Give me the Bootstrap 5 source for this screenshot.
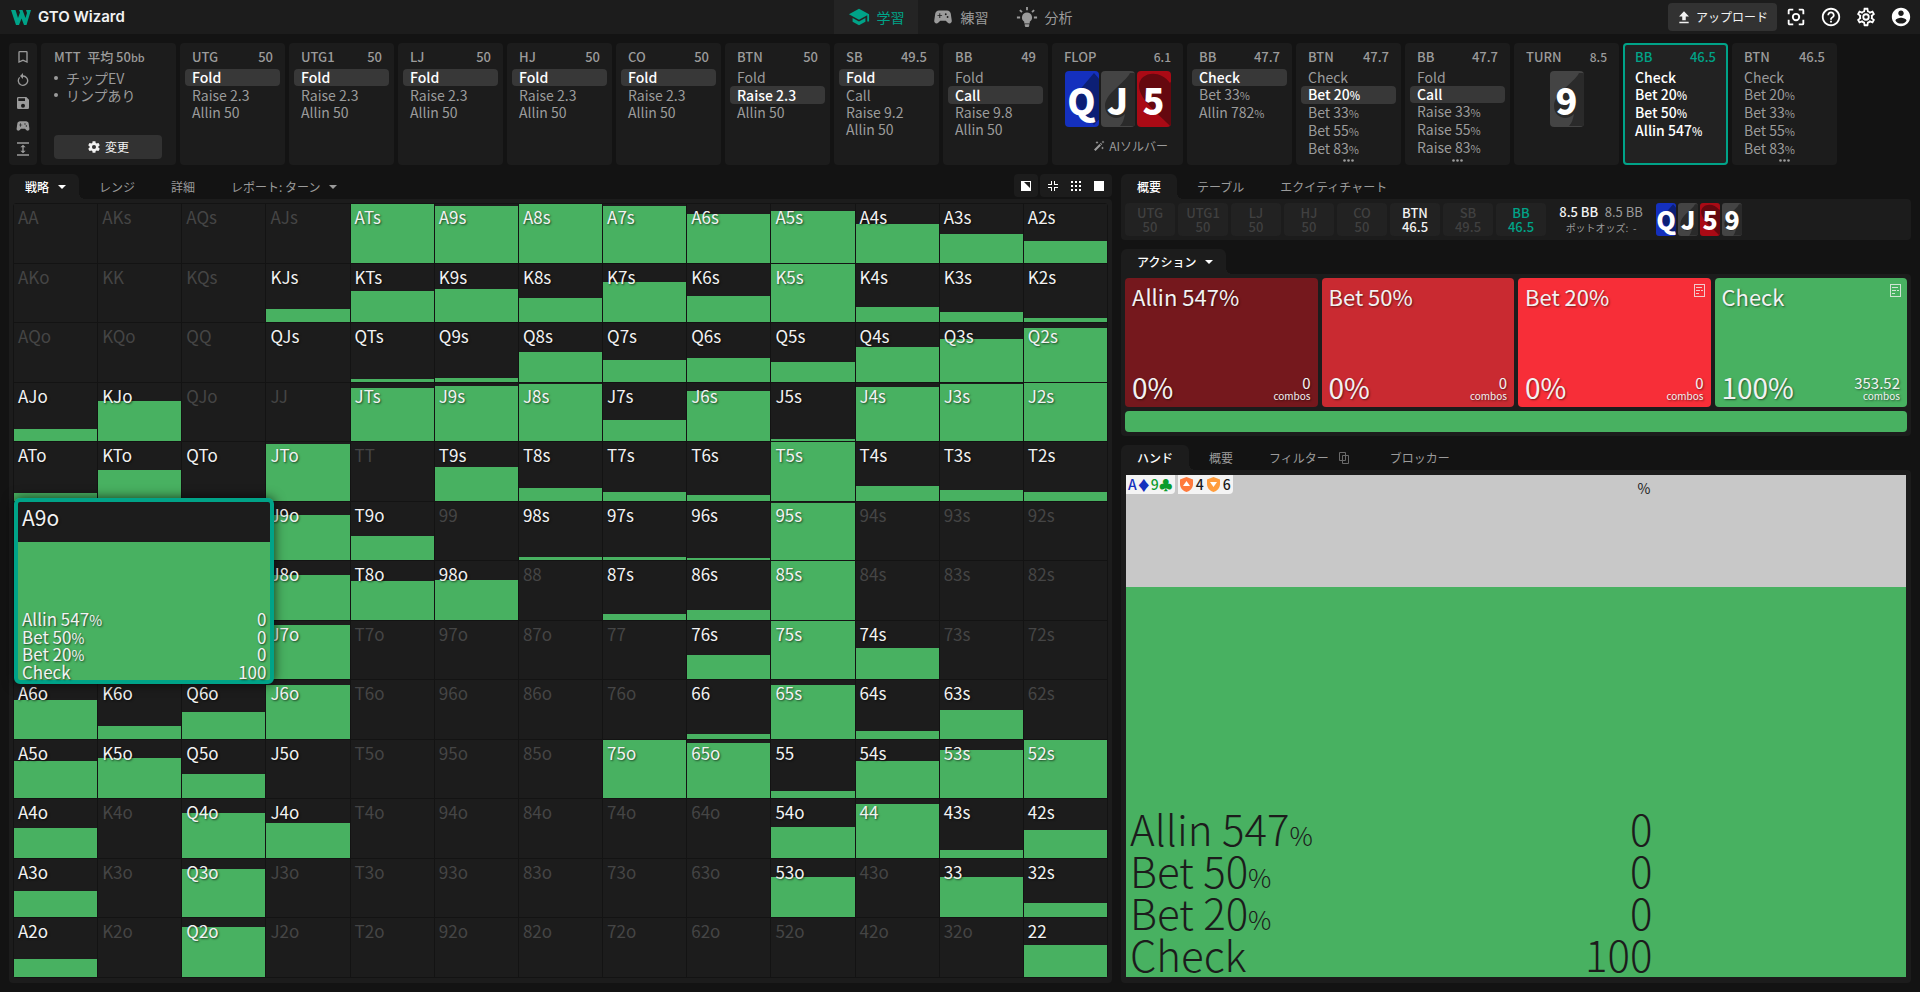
<!DOCTYPE html>
<html lang="ja" data-bs-theme="dark">
<head>
<meta charset="utf-8">
<meta name="viewport" content="width=device-width, initial-scale=1">
<title>GTO Wizard</title>
<link rel="stylesheet" href="https://cdn.jsdelivr.net/npm/bootstrap@5.3.0/dist/css/bootstrap.min.css">
<style>
:root{--panel:#1c1c1c;--page:#131313;--green:#48b161;--teal:#00a388;--dim:#9b9b9b}
body{background:var(--page);color:#f2f2f2;font-family:"Noto Sans CJK JP","Noto Sans",sans-serif;font-size:12px;line-height:18px;min-height:100vh}
button{font:inherit;color:inherit;border:0;background:none;padding:0}
a{color:inherit;text-decoration:none}
svg{display:block;fill:currentColor;flex:none}
.i12{width:12px;height:12px}.i14{width:14px;height:14px}.i16{width:16px;height:16px}.i22{width:22px;height:22px}
.top-bar{background:var(--panel);height:34px;display:grid;grid-template-columns:1fr auto 1fr;color:var(--dim)}
.brand{padding-left:11px;gap:7px}
.brand-name{font:600 15px/20px Inter,sans-serif;color:#f2f2f2}
.main-tab{width:84px;font-size:14px;gap:7px}
.main-tab.on{background:#242424;color:var(--teal)}
.top-icons{gap:13px}
.upload-btn{background:#323232;height:28px;border-radius:4px;padding:0 9px;gap:5px;color:#f2f2f2}
.panel{background:var(--panel);border-radius:4px}
.strip{padding:0 9px;margin-top:9px;gap:4px;height:122px;color:var(--dim)}
.tools{width:28px;padding:6px 0 8px}
.setup{width:135px;padding:5px 14px 6px 13px;font-size:14px}
.setup ul{padding:0;list-style:none;margin:4px 0 0;line-height:17px}
.setup li::before{content:"";display:inline-block;width:4px;height:4px;border-radius:50%;background:currentColor;margin-right:8px;vertical-align:4px}
.setup .fs{font-size:13px;font-weight:500}
.edit-btn{background:#323232;height:24px;border-radius:4px;color:#f2f2f2;font-size:12px;gap:4px}
.node{width:105px;padding:5px 5px 0}
.node-head{font-size:13px;font-weight:500;padding:0 7px;height:18px;margin-bottom:3px}
.node-head .pot-size{font-size:12px}
.node-rows{display:grid;grid-template-rows:repeat(5,1fr);height:87px;font-size:14px}
.node-rows button{text-align:left;padding:0 7px;line-height:17px;border-radius:4px;white-space:nowrap}
.node-rows .sel{background:#383838;color:#fff;font-weight:500}
.node small,.pct{font-size:11px}
.node.act{box-shadow:inset 0 0 0 2px var(--teal);background:#222}
.node.act .node-rows{color:#fff;font-weight:500}.node.act .node-head{color:var(--teal)}
.more{width:11px;height:3px;margin:3px auto 0}
.flop{width:131px}
.flop .solver{gap:4px;margin:10px 10px 0 auto}
.cards{gap:2px}
.node .cards{padding-top:2px}
.pcard{position:relative;border-radius:4px;width:34px;height:56px;font-size:36px;font-weight:700;color:#fff;display:flex;align-items:center;justify-content:center;line-height:56px}
.pcard svg{position:absolute;inset:0;width:100%;height:100%;overflow:hidden;border-radius:inherit}
.pcard b{position:relative}
.pcard.mini{width:20px;height:33px;font-size:25px;line-height:33px;border-radius:3px}
.c-d{background:#1430be}.c-d svg{color:#0c1f75}
.c-s{background:#444}.c-s svg{color:#2a2a2a}
.c-h{background:#aa0a15}.c-h svg{color:#65080f}
.work{padding:9px;gap:9px}
.left-col{flex:1103 1 0;min-width:0}.right-col{flex:790 1 0;min-width:0}
.tab-row{height:25px;gap:4px;color:var(--dim)}
.tab-row.next{margin-top:9px}
.tab-btn{height:25px;padding:0 16px;display:flex;align-items:center;gap:9px}
.tab-btn.on{background:var(--panel);color:#fff;font-weight:500;border-radius:6px 6px 0 0;position:relative}
.tab-btn.on.drop{padding-right:13px}
.tab-btn.on::after{content:"";position:absolute;left:100%;bottom:0;width:6px;height:6px;background:radial-gradient(circle at 100% 0,transparent 6px,var(--panel) 6px)}
.body-panel{background:var(--panel);border-radius:0 4px 4px 4px;padding:4px}
.caret{width:8px;height:4px}
.views{gap:2px}
.view-box{background:var(--panel);border-radius:4px;height:23px;padding:0 7px;gap:11px}
button.view-box{padding:0 6px}
.matrix{flex:1;display:grid;grid-template:repeat(13,1fr)/repeat(13,1fr);gap:1px;padding:1px;background:#131313;border-radius:4px;position:relative;margin-bottom:1px}
.hand{background:var(--panel);display:flex;align-items:flex-end;position:relative;min-width:0;min-height:0}
.hand i{flex:1;background:var(--green)}
.hand span{position:absolute;left:4px;top:3px;font-size:17px;line-height:20px;color:#454545}
.hand.in span,.pop{color:#f2f2f2;text-shadow:1px 1px 2px rgba(0,0,0,.6)}
.pop{position:absolute;grid-area:6/1/9/4;inset:-4px -9px -5px 0;z-index:2;border:4px solid var(--teal);border-radius:6px;background:linear-gradient(#1c1c1c 40px,var(--green) 40px);box-shadow:0 0 12px rgba(0,0,0,.7);padding:0 4px;display:flex;flex-direction:column;justify-content:space-between;font-size:17px}
.pop strong{font-size:21px;font-weight:400;line-height:31px}
.pop dl{display:grid;grid-template:repeat(4,1fr)/1fr auto;height:70px;line-height:17px;margin:0}
.pop dt{font-weight:400}.pop dd{margin:0;text-align:right}.pop small{font-size:14px;line-height:12px}
.seats{gap:3px}
.seat{background:#222;border-radius:4px;flex:0 0 50px;height:33px;color:#404040;font-size:13px;font-weight:500;line-height:14px;text-align:center;padding-top:3px}
.seat.w{color:#f2f2f2}.seat.t{color:var(--teal)}
.pot{width:88px;font-size:13px;line-height:16px;text-align:center;white-space:nowrap;padding-top:1px}
.pot b{font-weight:500}.pot span,.pot div{color:var(--dim)}
.pot div{font-size:10px}
.act-grid{display:grid;grid-template-columns:repeat(4,1fr);gap:4px}
.act-box{height:129px;border-radius:4px;padding:5px 5px 5px 7px;display:flex;flex-direction:column;justify-content:space-between;text-align:left;font-size:22px;line-height:26px;text-shadow:1px 1px 2px rgba(0,0,0,.5)}
.act-box svg{width:13px;height:13px;margin-top:1px;opacity:.8}
.act-box .big{font-size:28px;line-height:30px}
.act-box .cnt{font-size:15px;line-height:14px;text-align:right;padding-right:2px}
.act-box .cnt small{display:block;font-size:10px;line-height:12px}
.mix{height:21px;border-radius:4px;background:var(--green);margin-top:4px}
.combo{flex:1;background:linear-gradient(#c8c8c8 112px,var(--green) 112px);margin:1px 1px 2px;color:#1c1c1c;display:flex;flex-direction:column;justify-content:space-between}
.combo-top{width:68%;padding-right:6px;gap:3px;font-size:14px}
.chip{background:#f4f4f4;height:19px;border-radius:0 0 4px 0;padding:0 2px;gap:3px;font-weight:500;line-height:19px;display:flex;align-items:center}
.chip .d{color:#1430be}.chip .c{color:#0a9c2c}
.big-list{font-size:42px;font-weight:300;line-height:42px;margin:0 0 2px;width:68%;padding:0 4px}
.big-list div{display:flex;justify-content:space-between;height:42px}
.big-list dt{font-weight:300}.big-list dd{margin:0}
.big-list small{font-size:26px;line-height:26px}
</style>
</head>
<body class="d-flex flex-column">
<svg width="0" height="0" class="position-absolute" aria-hidden="true"><defs>
<symbol id="school" viewBox="0 0 24 24"><path d="M5 13.2v4L12 21l7-3.8v-4L12 17zM12 3 1 9l11 6 9-4.9V17h2V9z"/></symbol>
<symbol id="pad" viewBox="0 0 24 24"><path fill-rule="evenodd" d="M21.58 16.09l-1.09-7.66C20.21 6.46 18.52 5 16.53 5H7.47C5.48 5 3.79 6.46 3.51 8.43l-1.09 7.66C2.2 17.63 3.39 19 4.94 19c.68 0 1.32-.27 1.8-.75L9 16h6l2.25 2.25c.48.48 1.13.75 1.8.75 1.56 0 2.75-1.37 2.53-2.91zM11 11H9v2H8v-2H6v-1h2V8h1v2h2zm4-1a1 1 0 1 1 0-2 1 1 0 0 1 0 2zm2 3a1 1 0 1 1 0-2 1 1 0 0 1 0 2z"/></symbol>
<symbol id="bulb" viewBox="0 0 24 24"><path d="M12 7a5.5 5.5 0 0 0-3 10.100V19h6v-1.900A5.500 5.500 0 0 0 12 7zM9.500 20h5v1.500H14V23h-4v-1.500h-.5zM11 1h2v3.500h-2zM1 11.500h3.500v2H1zM19.500 11.500H23v2h-3.500zM3.500 5.200 5 3.800l2.200 2.200-1.400 1.400zM16.800 6 19 3.800l1.500 1.400-2.300 2.200z"/></symbol>
<symbol id="upload" viewBox="0 0 24 24"><path d="M4 20h16v2.500H4zM3.500 11H9v6.500h6V11h5.500L12 2z"/></symbol>
<symbol id="focus" viewBox="0 0 24 24"><path fill-rule="evenodd" d="M5 15H3v4c0 1.100.9 2 2 2h4v-2H5zM5 5h4V3H5a2 2 0 0 0-2 2v4h2zm14-2h-4v2h4v4h2V5a2 2 0 0 0-2-2zm0 16h-4v2h4a2 2 0 0 0 2-2v-4h-2zM12 7.500a4.500 4.500 0 1 0 0 9 4.500 4.500 0 0 0 0-9zm0 7a2.500 2.500 0 1 1 0-5 2.500 2.500 0 0 1 0 5z"/></symbol>
<symbol id="help" viewBox="0 0 24 24"><path d="M11 18h2v-2h-2v2zm1-16C6.480 2 2 6.480 2 12s4.480 10 10 10 10-4.480 10-10S17.520 2 12 2zm0 18c-4.410 0-8-3.590-8-8s3.590-8 8-8 8 3.590 8 8-3.590 8-8 8zm0-14c-2.210 0-4 1.790-4 4h2c0-1.100.9-2 2-2s2 .9 2 2c0 2-3 1.750-3 5h2c0-2.250 3-2.500 3-5 0-2.210-1.790-4-4-4z"/></symbol>
<symbol id="cogo" viewBox="0 0 24 24"><path fill-rule="evenodd" d="M12,8A4,4 0 0,1 16,12A4,4 0 0,1 12,16A4,4 0 0,1 8,12A4,4 0 0,1 12,8M12,10A2,2 0 0,0 10,12A2,2 0 0,0 12,14A2,2 0 0,0 14,12A2,2 0 0,0 12,10M10,22C9.75,22 9.54,21.82 9.5,21.58L9.13,18.93C8.5,18.68 7.96,18.34 7.44,17.94L4.95,18.95C4.73,19.03 4.46,18.95 4.34,18.73L2.34,15.27C2.21,15.05 2.27,14.78 2.46,14.63L4.57,12.97L4.5,12L4.57,11L2.46,9.37C2.27,9.22 2.21,8.95 2.34,8.73L4.34,5.27C4.46,5.05 4.73,4.96 4.95,5.05L7.44,6.05C7.96,5.66 8.5,5.32 9.13,5.07L9.5,2.42C9.54,2.18 9.75,2 10,2H14C14.25,2 14.46,2.18 14.5,2.42L14.87,5.07C15.5,5.32 16.04,5.66 16.56,6.05L19.05,5.05C19.27,4.96 19.54,5.05 19.66,5.27L21.66,8.73C21.79,8.95 21.73,9.22 21.54,9.37L19.43,11L19.5,12L19.43,13L21.54,14.63C21.73,14.78 21.79,15.05 21.66,15.27L19.66,18.73C19.54,18.95 19.27,19.04 19.05,18.95L16.56,17.95C16.04,18.34 15.5,18.68 14.87,18.93L14.5,21.58C14.46,21.82 14.25,22 14,22H10M11.25,4L10.88,6.61C9.68,6.86 8.62,7.5 7.85,8.39L5.44,7.35L4.69,8.65L6.8,10.2C6.4,11.37 6.4,12.64 6.8,13.8L4.68,15.36L5.43,16.66L7.86,15.62C8.63,16.5 9.68,17.14 10.87,17.38L11.24,20H12.76L13.13,17.39C14.32,17.14 15.37,16.5 16.14,15.62L18.57,16.66L19.32,15.36L17.2,13.81C17.6,12.64 17.6,11.37 17.2,10.2L19.31,8.65L18.56,7.35L16.15,8.39C15.38,7.5 14.32,6.86 13.12,6.62L12.75,4H11.25Z"/></symbol>
<symbol id="cog" viewBox="0 0 24 24"><path fill-rule="evenodd" d="M12,15.5A3.5,3.5 0 0,1 8.5,12A3.5,3.5 0 0,1 12,8.5A3.5,3.5 0 0,1 15.5,12A3.5,3.5 0 0,1 12,15.5M19.43,12.97L19.5,12L19.43,11L21.54,9.37C21.73,9.22 21.79,8.95 21.66,8.73L19.66,5.27C19.54,5.05 19.27,4.96 19.05,5.05L16.56,6.05C16.04,5.66 15.5,5.32 14.87,5.07L14.5,2.42C14.46,2.18 14.25,2 14,2H10C9.75,2 9.54,2.18 9.5,2.42L9.13,5.07C8.5,5.32 7.96,5.66 7.44,6.05L4.95,5.05C4.73,4.96 4.46,5.05 4.34,5.27L2.34,8.73C2.21,8.95 2.27,9.22 2.46,9.37L4.57,11L4.5,12L4.57,12.97L2.46,14.63C2.27,14.78 2.21,15.05 2.34,15.27L4.34,18.73C4.46,18.95 4.73,19.03 4.95,18.95L7.44,17.94C7.96,18.34 8.5,18.68 9.13,18.93L9.5,21.58C9.54,21.82 9.75,22 10,22H14C14.25,22 14.46,21.82 14.5,21.58L14.87,18.93C15.5,18.67 16.04,18.34 16.56,17.94L19.05,18.95C19.27,19.03 19.54,18.95 19.66,18.73L21.66,15.27C21.79,15.05 21.73,14.78 21.54,14.63Z"/></symbol>
<symbol id="user" viewBox="0 0 24 24"><path d="M12 2C6.480 2 2 6.480 2 12s4.480 10 10 10 10-4.480 10-10S17.520 2 12 2zm0 3c1.660 0 3 1.340 3 3s-1.340 3-3 3-3-1.340-3-3 1.340-3 3-3zm0 14.200c-2.500 0-4.710-1.280-6-3.220.03-1.990 4-3.080 6-3.080 1.990 0 5.970 1.090 6 3.080-1.290 1.940-3.500 3.220-6 3.220z"/></symbol>
<symbol id="mark-i" viewBox="0 0 24 24"><path fill-rule="evenodd" d="M17 3H7a2 2 0 0 0-2 2v16l7-3 7 3V5a2 2 0 0 0-2-2zm0 15-5-2.200L7 18V5h10z"/></symbol>
<symbol id="redo" viewBox="0 0 24 24"><path d="M12 5V1.500L7.500 6l4.500 4.500V7a6 6 0 1 1-4.300 1.800L6.300 7.400A8 8 0 1 0 12 5z"/></symbol>
<symbol id="save" viewBox="0 0 24 24"><path fill-rule="evenodd" d="M17 3H5a2 2 0 0 0-2 2v14a2 2 0 0 0 2 2h14a2 2 0 0 0 2-2V7zm-5 16a3 3 0 1 1 0-6 3 3 0 0 1 0 6zm3-10H5V5h10z"/></symbol>
<symbol id="expand" viewBox="0 0 24 24"><path d="M3 20h18v2H3zM3 2h18v2H3zM13 9.500h3l-4-4-4 4h3v5H8l4 4 4-4h-3z"/></symbol>
<symbol id="wand" viewBox="0 0 24 24"><path d="m2 19 11-11 3 3L5 22zM14 7l1.500-1.500 3 3L17 10zM8 2l1 2 2 1-2 1-1 2-1-2-2-1 2-1zM20 1l.8 2.200L23 4l-2.200.8L20 7l-.8-2.200L17 4l2.200-.8zM19 13l.9 2.100L22 16l-2.100.9L19 19l-.9-2.100L16 16l2.100-.9z"/></symbol>
<symbol id="note" viewBox="0 0 13 13"><path fill-rule="evenodd" d="M1 0h11v13H1zM2 1v11h9V1zM3 3h6v1H3zM3 6h4v1H3zM8 6h2v1H8zM3 9h3v1H3z"/></symbol>
<symbol id="dots" viewBox="0 0 11 3"><circle cx="1.500" cy="1.500" r="1.300"/><circle cx="5.500" cy="1.500" r="1.300"/><circle cx="9.500" cy="1.500" r="1.300"/></symbol>
<symbol id="dia" viewBox="0 0 34 56"><path d="M29 2 52 28 29 54 7 28z"/></symbol>
<symbol id="spa" viewBox="0 0 34 56"><path d="M29 2C24 12 4 22 4 35c0 11 12 16 20 8-1 5-2 9-5 12h20V2z"/></symbol>
<symbol id="hea" viewBox="0 0 34 56"><path d="M33 55C24 45 2 29 2 15 2 2 22-3 33 12c3-4 8-8 12-8v40z"/></symbol>
<symbol id="car" viewBox="0 0 8 4"><path d="M0 0h8L4 4z"/></symbol>
</defs></svg>

<header class="top-bar">
  <a href="#" class="brand d-flex align-items-center"><svg width="20" height="15" viewBox="0 0 20 15" style="color:var(--teal)"><path d="M0 0h4.500l2.500 8L9 2.500 8 0h3.500l3 8L16 3l-1-3h5l-4.500 15H13l-2.500-6.500L8 15H5z"/></svg><span class="brand-name">GTO Wizard</span></a>
  <nav class="d-flex">
    <a href="#" class="main-tab on d-flex align-items-center justify-content-center"><svg class="i22"><use href="#school"/></svg>学習</a>
    <a href="#" class="main-tab d-flex align-items-center justify-content-center"><svg class="i22"><use href="#pad"/></svg>練習</a>
    <a href="#" class="main-tab d-flex align-items-center justify-content-center"><svg class="i22"><use href="#bulb"/></svg>分析</a>
  </nav>
  <div class="d-flex align-items-center justify-content-end text-white pe-2 gap-2">
    <button class="upload-btn d-flex align-items-center"><svg class="i14"><use href="#upload"/></svg>アップロード</button>
    <div class="top-icons d-flex">
      <button aria-label="全画面"><svg class="i22"><use href="#focus"/></svg></button>
      <button aria-label="ヘルプ"><svg class="i22"><use href="#help"/></svg></button>
      <button aria-label="設定"><svg class="i22"><use href="#cogo"/></svg></button>
      <button aria-label="アカウント"><svg class="i22"><use href="#user"/></svg></button>
    </div>
  </div>
</header>

<section class="strip d-flex" id="strip">
  <div class="panel tools d-flex flex-column align-items-center justify-content-between">
    <button aria-label="ブックマーク"><svg class="i16"><use href="#mark-i"/></svg></button>
    <button aria-label="リセット"><svg class="i16"><use href="#redo"/></svg></button>
    <button aria-label="保存"><svg class="i16"><use href="#save"/></svg></button>
    <button aria-label="練習"><svg class="i16"><use href="#pad"/></svg></button>
    <button aria-label="展開"><svg class="i16"><use href="#expand"/></svg></button>
  </div>
  <div class="panel setup d-flex flex-column">
    <div class="fs text-nowrap">MTT&ensp;平均 50<span class="pct">bb</span></div>
    <ul><li>チップEV</li><li>リンプあり</li></ul>
    <button class="edit-btn d-flex align-items-center justify-content-center mt-auto"><svg class="i14"><use href="#cog"/></svg>変更</button>
  </div>
</section>

<main class="work d-flex flex-grow-1">
  <section class="left-col d-flex flex-column">
    <div class="tab-row d-flex">
      <button class="tab-btn on drop">戦略<svg class="caret"><use href="#car"/></svg></button>
      <button class="tab-btn">レンジ</button>
      <button class="tab-btn">詳細</button>
      <button class="tab-btn">レポート: ターン<svg class="caret"><use href="#car"/></svg></button>
      <div class="views ms-auto d-flex text-white">
        <button class="view-box" aria-label="分割"><svg width="12" height="12" viewBox="0 0 12 12"><path fill-rule="evenodd" d="M1 1h10v10H1zM4 2l6 6V2z"/></svg></button>
        <div class="view-box d-flex align-items-center">
          <button aria-label="縮小"><svg width="12" height="12" viewBox="0 0 12 12"><path d="M4 1h1v4H1V4h3zM7 1h1v3h3v1H7zM1 7h4v4H4V8H1zM7 7h4v1H8v3H7z"/></svg></button>
          <button aria-label="格子"><svg width="12" height="12" viewBox="0 0 12 12"><path d="M1 1h2v2H1zM5 1h2v2H5zM9 1h2v2H9zM1 5h2v2H1zM5 5h2v2H5zM9 5h2v2H9zM1 9h2v2H1zM5 9h2v2H5zM9 9h2v2H9z"/></svg></button>
          <button aria-label="単一"><svg width="12" height="12" viewBox="0 0 12 12"><path d="M1 1h10v10H1z"/></svg></button>
        </div>
      </div>
    </div>
    <div class="body-panel flex-grow-1 d-flex">
      <div class="matrix" id="matrix">
        <div class="pop"><strong>A9o</strong>
          <dl><dt>Allin 547<small>%</small></dt><dd>0</dd><dt>Bet 50<small>%</small></dt><dd>0</dd><dt>Bet 20<small>%</small></dt><dd>0</dd><dt>Check</dt><dd>100</dd></dl>
        </div>
      </div>
    </div>
  </section>

  <section class="right-col d-flex flex-column">
    <div class="tab-row d-flex">
      <button class="tab-btn on">概要</button><button class="tab-btn">テーブル</button><button class="tab-btn">エクイティチャート</button>
    </div>
    <div class="body-panel seats d-flex">
      <div class="seat">UTG<br>50</div><div class="seat">UTG1<br>50</div><div class="seat">LJ<br>50</div><div class="seat">HJ<br>50</div><div class="seat">CO<br>50</div><div class="seat w">BTN<br>46.5</div><div class="seat">SB<br>49.5</div><div class="seat t">BB<br>46.5</div>
      <div class="pot ms-2"><b>8.5 BB</b>&ensp;<span>8.5 BB</span><div>ポットオッズ: &nbsp;-</div></div>
      <div class="cards d-flex ms-2">
        <div class="pcard mini c-d"><svg><use href="#dia"/></svg><b>Q</b></div><div class="pcard mini c-s"><svg><use href="#spa"/></svg><b>J</b></div><div class="pcard mini c-h"><svg><use href="#hea"/></svg><b>5</b></div><div class="pcard mini c-s"><svg><use href="#spa"/></svg><b>9</b></div>
      </div>
    </div>

    <div class="tab-row next d-flex"><button class="tab-btn on drop">アクション<svg class="caret"><use href="#car"/></svg></button></div>
    <div class="body-panel">
      <div class="act-grid" id="acts"></div>
      <div class="mix"></div>
    </div>

    <div class="tab-row next d-flex">
      <button class="tab-btn on">ハンド</button><button class="tab-btn">概要</button>
      <button class="tab-btn">フィルター<svg class="i12" viewBox="0 0 12 12"><path fill="none" stroke="#6a6a6a" d="M1.500.5h6v8h-6zM4.500 3.500h6v8h-6z"/></svg></button>
      <button class="tab-btn ms-1">ブロッカー</button>
    </div>
    <div class="body-panel flex-grow-1 d-flex">
      <div class="combo">
        <div class="combo-top d-flex">
          <div class="chip"><div><span class="d">A♦</span><span class="c">9♣</span></div></div>
          <div class="chip"><svg width="13" height="15" viewBox="0 0 13 15"><path fill="#ff7a3d" d="M6.500 0 13 2.500V7c0 4-3 7-6.500 8C3 14 0 11 0 7V2.500z"/><path fill="#fff" d="M6.500 4 10 9H3z"/></svg>4<svg width="13" height="15" viewBox="0 0 13 15"><path fill="#ff9d3d" d="M6.500 0 13 2.500V7c0 4-3 7-6.500 8C3 14 0 11 0 7V2.500z"/><path fill="#fff" d="M6.500 10 3 5h7z"/></svg>6</div>
          <span class="ms-auto pt-1">%</span>
        </div>
        <dl class="big-list">
          <div><dt>Allin 547<small>%</small></dt><dd>0</dd></div>
          <div><dt>Bet 50<small>%</small></dt><dd>0</dd></div>
          <div><dt>Bet 20<small>%</small></dt><dd>0</dd></div>
          <div><dt>Check</dt><dd>100</dd></div>
        </dl>
      </div>
    </div>
  </section>
</main>

<script>
// Action history: [position, stack, options, chosen index, state]
const pct = t => t.replace(/%/g, '<small>%</small>');
const pcard = (s, r) => `<div class="pcard c-${s[0]}"><svg><use href="#${s}"/></svg><b>${r}</b></div>`;
const nodes = [
 ['UTG','50',['Fold','Raise 2.3','Allin 50'],0],['UTG1','50',['Fold','Raise 2.3','Allin 50'],0],
 ['LJ','50',['Fold','Raise 2.3','Allin 50'],0],['HJ','50',['Fold','Raise 2.3','Allin 50'],0],
 ['CO','50',['Fold','Raise 2.3','Allin 50'],0],['BTN','50',['Fold','Raise 2.3','Allin 50'],1],
 ['SB','49.5',['Fold','Call','Raise 9.2','Allin 50'],0],['BB','49',['Fold','Call','Raise 9.8','Allin 50'],1],
 'flop',
 ['BB','47.7',['Check','Bet 33%','Allin 782%'],0],['BTN','47.7',['Check','Bet 20%','Bet 33%','Bet 55%','Bet 83%'],1],
 ['BB','47.7',['Fold','Call','Raise 33%','Raise 55%','Raise 83%'],1],
 'turn',
 ['BB','46.5',['Check','Bet 20%','Bet 50%','Allin 547%'],-1,'act'],['BTN','46.5',['Check','Bet 20%','Bet 33%','Bet 55%','Bet 83%'],-1]];
const head = (a, b, c = '') => `<div class="node-head d-flex justify-content-between"><span>${a}</span><span class="${c}">${b}</span></div>`;
document.getElementById('strip').insertAdjacentHTML('beforeend', nodes.map(n => {
  if (n === 'flop') return `<div class="panel node flop">${head('FLOP', '6.1', 'pot-size')}<div class="cards d-flex justify-content-center">${pcard('dia', 'Q')}${pcard('spa', 'J')}${pcard('hea', '5')}</div><button class="solver d-flex align-items-center"><svg class="i12"><use href="#wand"/></svg>AIソルバー</button></div>`;
  if (n === 'turn') return `<div class="panel node">${head('TURN', '8.5', 'pot-size')}<div class="cards d-flex justify-content-center">${pcard('spa', '9')}</div></div>`;
  const [p, s, o, k, c = ''] = n;
  return `<div class="panel node ${c}">${head(p, s)}<div class="node-rows">${o.map((t, i) => `<button class="${i === k ? 'sel' : ''}">${pct(t)}</button>`).join('')}</div>${o.length > 4 ? '<svg class="more"><use href="#dots"/></svg>' : ''}</div>`;
}).join(''));

// Share of each starting hand in the range, out of F; null = not in range
const _ = null, F = 59;
const range = [
 [_,_,_,_,F,57,F,57,49,52,39,29,22],
 [_,_,_,13,31,33,24,40,26,F,15,10,4],
 [_,_,_,0,3,4,30,22,24,20,35,43,54],
 [12,40,_,_,53,56,58,21,50,2,54,58,F],
 [8,31,0,57,_,34,13,9,6,F,15,11,9],
 [_,_,_,46,25,_,3,3,2,57,_,_,_],
 [_,_,_,45,39,40,_,6,10,F,_,_,_],
 [_,_,_,54,_,_,_,_,24,F,31,_,_],
 [39,13,27,54,_,_,_,_,5,54,8,29,_],
 [38,41,25,0,_,_,_,F,56,7,38,49,F],
 [30,_,45,35,_,_,_,_,_,31,54,8,28],
 [27,_,49,_,_,_,_,_,_,41,_,41,14],
 [18,_,51,_,_,_,_,_,_,_,_,_,32]];
const R = 'AKQJT98765432';
const covered = (i, j) => i >= 5 && i <= 7 && j <= 2; // under the open hand card
document.getElementById('matrix').insertAdjacentHTML('beforeend', range.map((row, i) => row.map((v, j) => {
  if (covered(i, j)) return '<div class="hand"></div>';
  const name = i === j ? R[i] + R[i] : i < j ? R[i] + R[j] + 's' : R[j] + R[i] + 'o';
  return `<div class="hand ${v === null ? '' : 'in'}"><i style="height:${Math.round((v || 0) / F * 100)}%"></i><span>${name}</span></div>`;
}).join('')).join(''));

document.getElementById('acts').innerHTML = [
 ['Allin 547%','0%','0','#75181d',0],['Bet 50%','0%','0','#c92a31',0],['Bet 20%','0%','0','#f72e38',1],['Check','100%','353.52','#48b161',1]
].map(([a, b, c, col, n]) => `<button class="act-box" style="background:${col}"><span class="d-flex justify-content-between w-100"><span>${a}</span>${n ? '<svg><use href="#note"/></svg>' : ''}</span><span class="d-flex justify-content-between align-items-end w-100"><span class="big">${b}</span><span class="cnt">${c}<small>combos</small></span></span></button>`).join('');
</script>
<script src="https://cdn.jsdelivr.net/npm/bootstrap@5.3.0/dist/js/bootstrap.bundle.min.js"></script>
</body>
</html>
